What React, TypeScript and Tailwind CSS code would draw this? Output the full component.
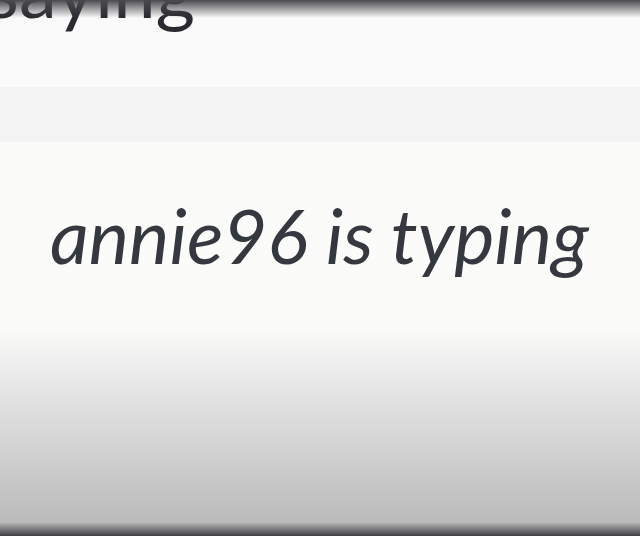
import React from 'react';

const font = { fontFamily: 'Lato, "Open Sans", sans-serif' };

export default function App() {
  return (
    <div className="relative w-[640px] h-[536px] overflow-hidden bg-[#fafafa]" style={font}>
      {/* previous message, cut off at top */}
      <div className="h-[87px] overflow-hidden">
        <p className="mt-[-61px] ml-[-14px] text-[76px] leading-[100px] text-[#2a2b30]">saying</p>
      </div>
      <div className="h-[55px] bg-[#f3f3f3]" />
      {/* typing indicator */}
      <div className="h-[183px] bg-[#fbfbfa] flex items-center pl-[50px]">
        <p className="italic text-[76px] leading-none text-[#363840] mt-[2px]">annie96 is typing</p>
      </div>
      <div className="h-[211px] bg-gradient-to-b from-[#fbfbfa] via-[#d8d8d8] to-[#b6b6b6]" />
      {/* screen edge shadows */}
      <div className="absolute top-0 left-0 right-0 h-[18px] bg-gradient-to-b from-[#4a4a4e] to-transparent" />
      <div className="absolute bottom-0 left-0 right-0 h-[14px] bg-gradient-to-t from-[#3f3f44] to-transparent" />
    </div>
  );
}
